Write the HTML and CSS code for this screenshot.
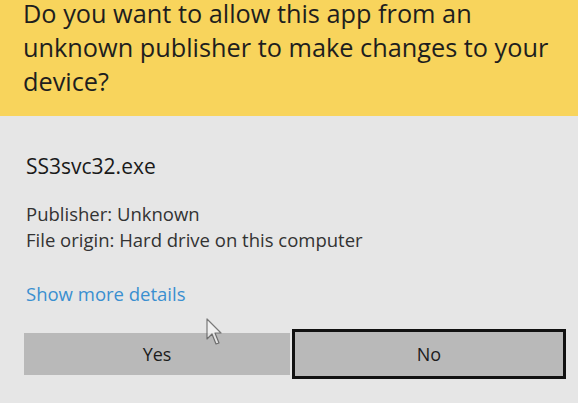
FILE: index.html
```html
<!DOCTYPE html>
<html lang="en">
<head>
  <meta charset="UTF-8">
  <title>User Account Control</title>
  <link rel="stylesheet" href="styles.css">
</head>
<body>
  <div class="uac">
    <header class="uac-head">
      <div class="uac-question">Do you want to allow this app from an unknown publisher to make changes to your device?</div>
    </header>
    <main class="uac-body">
      <div class="uac-file">SS3svc32.exe</div>
      <div class="uac-meta">
        <div>Publisher: Unknown</div>
        <div>File origin: Hard drive on this computer</div>
      </div>
      <a href="#" class="uac-link">Show more details</a>
      <div class="uac-buttons">
        <button class="uac-btn">Yes</button>
        <button class="uac-btn focused">No</button>
      </div>
    </main>
    <svg class="cursor" width="16" height="28" viewBox="0 0 16 28">
      <path d="M1 1 L1 21 L6 16 L10 26 L13 25 L9 15 L15 15 Z" fill="#f4f4f4" stroke="#555" stroke-width="1.2" stroke-linejoin="round"/>
    </svg>
  </div>
</body>
</html>
```

FILE: styles.css
```css
body {
  margin: 0;
  background: #e6e6e6;
  font-family: 'Open Sans', 'Noto Sans', Arial, sans-serif;
  color: #1c1c1c;
}
.uac {
  position: relative;
  width: 578px;
  height: 403px;
  overflow: hidden;
}
.uac-head {
  display: flow-root;
  background: #f8d45c;
  height: 116px;
  padding: 0 10px 0 23px;
  box-sizing: border-box;
}
.uac-question {
  font-size: 25.3px;
  line-height: 34px;
  margin-top: -4px;
  color: #1e1e1e;
}
.uac-body {
  padding: 38px 12px 0 26px;
}
.uac-file {
  font-size: 21px;
  line-height: 24px;
  color: #1a1a1a;
}
.uac-meta {
  margin-top: 23px;
  font-size: 18.5px;
  line-height: 26px;
  color: #333;
}
.uac-link {
  display: block;
  margin-top: 28px;
  font-size: 18.5px;
  line-height: 26px;
  color: #3a8fd0;
  text-decoration: none;
}
.uac-buttons {
  display: flex;
  align-items: center;
  margin: 22px 0 0 -2px;
}
.uac-btn {
  height: 42px;
  width: 266px;
  border: none;
  background: #b9b9b9;
  font-family: inherit;
  font-size: 18px;
  color: #1c1c1c;
  padding: 0;
}
.uac-btn.focused {
  width: 274px;
  height: 50px;
  margin-left: 2px;
  border: 3px solid #111;
}
.cursor {
  position: absolute;
  left: 206px;
  top: 318px;
  opacity: 0.75;
}
```
